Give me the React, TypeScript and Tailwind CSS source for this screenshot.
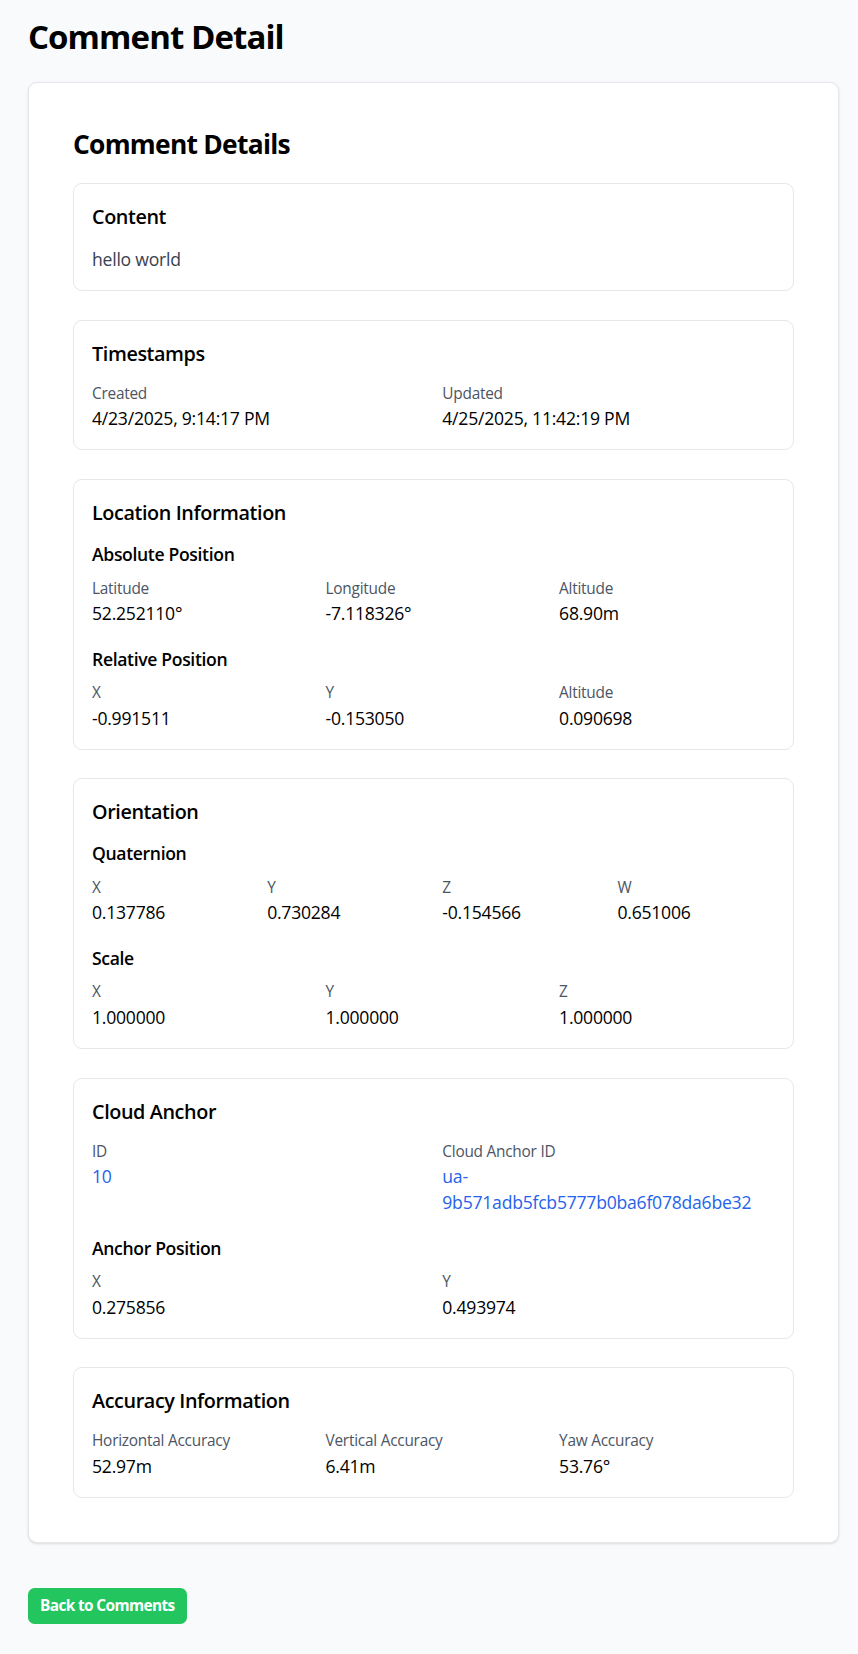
import React from "react";

const FONT = { fontFamily: '"Segoe UI", "Open Sans", "Noto Sans", sans-serif' };

function Field({ label, value, blue = false }: { label: string; value: React.ReactNode; blue?: boolean }) {
  return (
    <div>
      <div className="text-[15.4px] leading-[22.5px] text-[#4b5563]">{label}</div>
      <div className={"text-[17.6px] leading-[26px] " + (blue ? "text-[#2563eb]" : "text-black")}>{value}</div>
    </div>
  );
}

function Card({ title, children, last = false }: { title: string; children: React.ReactNode; last?: boolean }) {
  return (
    <section className={"rounded-[9px] border border-[#e5e7eb] bg-white p-[18px] " + (last ? "" : "mb-[28.8px]")}>
      <h3 className="mb-[14px] text-[19.8px] font-semibold leading-[30px] tracking-[-0.02em] text-black">{title}</h3>
      {children}
    </section>
  );
}

function Sub({ title, children, first = false }: { title: string; children: React.ReactNode; first?: boolean }) {
  return (
    <div className={first ? "" : "mt-[20.5px]"}>
      <h4 className="mb-[10.5px] text-[17.6px] font-semibold leading-[25px] tracking-[-0.02em] text-black">{title}</h4>
      {children}
    </div>
  );
}

export default function App() {
  return (
    <div style={FONT} className="min-h-screen bg-[#f9fafb] pb-[29px] pl-[28px] pr-[19px] pt-[17px] tracking-[-0.015em] text-black">
      <h1 className="mb-[25.4px] text-[33px] font-bold leading-[39.6px] tracking-[-0.028em]">Comment Detail</h1>

      <div className="rounded-[9px] border border-[#e5e7eb] bg-white p-[44px] shadow-sm">
        <h2 className="mb-[20.8px] text-[26.4px] font-bold leading-[35.2px] tracking-[-0.028em]">Comment Details</h2>

        <Card title="Content">
          <p className="text-[17.6px] leading-[26px] text-[#374151]">hello world</p>
        </Card>

        <Card title="Timestamps">
          <div className="grid grid-cols-2 gap-x-[17.6px]">
            <Field label="Created" value="4/23/2025, 9:14:17 PM" />
            <Field label="Updated" value="4/25/2025, 11:42:19 PM" />
          </div>
        </Card>

        <Card title="Location Information">
          <Sub title="Absolute Position" first>
            <div className="grid grid-cols-3 gap-x-[17.6px]">
              <Field label="Latitude" value="52.252110°" />
              <Field label="Longitude" value="-7.118326°" />
              <Field label="Altitude" value="68.90m" />
            </div>
          </Sub>
          <Sub title="Relative Position">
            <div className="grid grid-cols-3 gap-x-[17.6px]">
              <Field label="X" value="-0.991511" />
              <Field label="Y" value="-0.153050" />
              <Field label="Altitude" value="0.090698" />
            </div>
          </Sub>
        </Card>

        <Card title="Orientation">
          <Sub title="Quaternion" first>
            <div className="grid grid-cols-4 gap-x-[17.6px]">
              <Field label="X" value="0.137786" />
              <Field label="Y" value="0.730284" />
              <Field label="Z" value="-0.154566" />
              <Field label="W" value="0.651006" />
            </div>
          </Sub>
          <Sub title="Scale">
            <div className="grid grid-cols-3 gap-x-[17.6px]">
              <Field label="X" value="1.000000" />
              <Field label="Y" value="1.000000" />
              <Field label="Z" value="1.000000" />
            </div>
          </Sub>
        </Card>

        <Card title="Cloud Anchor">
          <div className="grid grid-cols-2 gap-x-[17.6px]">
            <Field label="ID" value="10" blue />
            <Field
              label="Cloud Anchor ID"
              blue
              value={
                <>
                  <span className="block">ua-</span>
                  <span className="block">9b571adb5fcb5777b0ba6f078da6be32</span>
                </>
              }
            />
          </div>
          <Sub title="Anchor Position">
            <div className="grid grid-cols-2 gap-x-[17.6px]">
              <Field label="X" value="0.275856" />
              <Field label="Y" value="0.493974" />
            </div>
          </Sub>
        </Card>

        <Card title="Accuracy Information" last>
          <div className="grid grid-cols-3 gap-x-[17.6px]">
            <Field label="Horizontal Accuracy" value="52.97m" />
            <Field label="Vertical Accuracy" value="6.41m" />
            <Field label="Yaw Accuracy" value="53.76°" />
          </div>
        </Card>
      </div>

      <div className="mt-[45px]">
        <button className="h-[36px] rounded-[6.6px] bg-[#22c55e] px-[12px] text-[15.4px] font-bold leading-[22px] tracking-[-0.04em] text-white">
          Back to Comments
        </button>
      </div>
    </div>
  );
}
